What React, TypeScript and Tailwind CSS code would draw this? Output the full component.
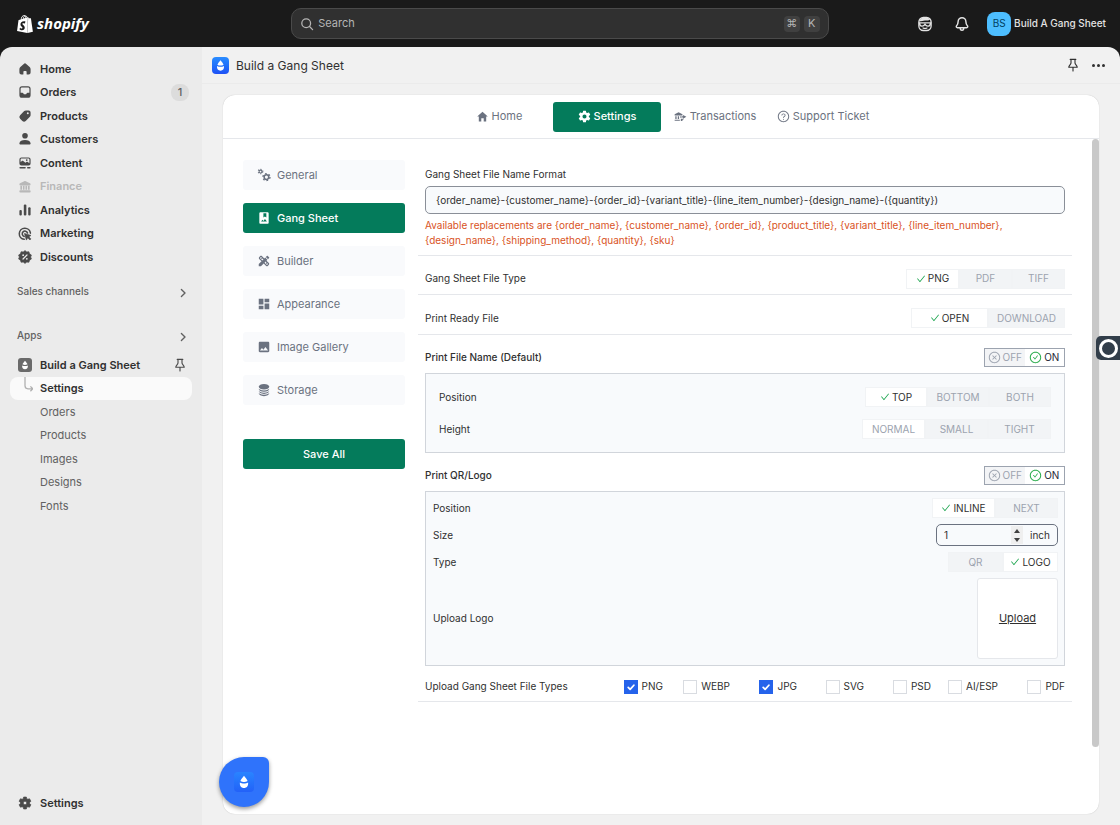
import React, { useState } from "react";
import {
  AiOutlineCheck,
  AiOutlineCheckCircle,
  AiOutlineCloseCircle,
  AiOutlineQuestionCircle,
} from "react-icons/ai";
import { IoMdHome } from "react-icons/io";
import { IoSettingsSharp } from "react-icons/io5";
import { MdDashboard, MdDesignServices, MdImage, MdPhotoAlbum } from "react-icons/md";
import { HiCircleStack } from "react-icons/hi2";
import { SiShopify } from "react-icons/si";

type IconProps = { className?: string };

function Svg({ className = "size-4", children }: IconProps & { children: React.ReactNode }) {
  return (
    <svg viewBox="0 0 20 20" fill="currentColor" className={`shrink-0 ${className}`} aria-hidden="true">
      {children}
    </svg>
  );
}

const HomeIcon = () => (
  <Svg>
    <path d="M8.5 3.6a2.2 2.2 0 0 1 3 0l4.3 4a3.6 3.6 0 0 1 1.2 2.7v4.2A2.5 2.5 0 0 1 14.500 17h-1.700a.8.8 0 0 1-.8-.8v-2.700a1 1 0 0 0-1-1H9a1 1 0 0 0-1 1v2.700a.8.8 0 0 1-.8.8H5.500A2.500 2.500 0 0 1 3 14.500v-4.200a3.600 3.600 0 0 1 1.200-2.700z" />
  </Svg>
);
const OrderIcon = () => (
  <Svg>
    <path
      fillRule="evenodd"
      d="M6.200 2.800h7.600A3.200 3.200 0 0 1 17 6v8a3.200 3.200 0 0 1-3.200 3.200H6.200A3.200 3.200 0 0 1 3 14V6a3.200 3.200 0 0 1 3.200-3.200zm0 1.600A1.700 1.700 0 0 0 4.500 6v4.800h2.300c.5 0 .9.300 1.100.7l.3.600c.2.400.600.700 1.100.7h1.400c.5 0 .9-.300 1.100-.7l.3-.6c.2-.4.6-.7 1.100-.7h2.300V6a1.700 1.700 0 0 0-1.700-1.600z"
    />
  </Svg>
);
const ProductIcon = () => (
  <Svg>
    <path
      fillRule="evenodd"
      d="M11.200 3h3.300A2.500 2.500 0 0 1 17 5.500v3.300c0 .8-.3 1.600-.9 2.200l-5.200 5.100a3 3 0 0 1-4.200 0l-2.800-2.800a3 3 0 0 1 0-4.200L9 3.900A3 3 0 0 1 11.200 3zm2.300 4.700a1.200 1.200 0 1 0 0-2.400 1.200 1.200 0 0 0 0 2.400z"
    />
  </Svg>
);
const PersonIcon = () => (
  <Svg>
    <circle cx="10" cy="6" r="3.500" />
    <path d="M3 15.200C3.500 12.700 6.200 11.200 10 11.200s6.500 1.500 7 4c.2 1-.6 1.800-1.600 1.800H4.600c-1 0-1.800-.8-1.600-1.800z" />
  </Svg>
);
const ContentIcon = () => (
  <Svg>
    <path
      fillRule="evenodd"
      d="M5.500 3h9A2.500 2.500 0 0 1 17 5.500v5a2.500 2.500 0 0 1-2.500 2.500h-9A2.500 2.500 0 0 1 3 10.500v-5A2.500 2.500 0 0 1 5.500 3zm.3 1.500c-.8 0-1.300.5-1.300 1.300v3l1.700-1.400c.5-.4 1.100-.4 1.600 0l2.700 2.300 1.200-.9c.5-.4 1.200-.4 1.700 0l2.100 1.500V5.800c0-.8-.5-1.300-1.300-1.300zM12.200 7.500a1.100 1.100 0 1 0 0-2.200 1.100 1.100 0 0 0 0 2.200z"
    />
    <rect x="3" y="15" width="8" height="1.800" rx=".9" />
    <rect x="12.500" y="15" width="4.500" height="1.800" rx=".9" />
  </Svg>
);
const FinanceIcon = () => (
  <Svg>
    <path d="M9.100 2.700c.6-.3 1.200-.3 1.800 0l5.300 2.600c1.400.7.900 2.700-.6 2.700H4.400C2.900 8 2.400 6 3.800 5.300z" />
    <path d="M4.200 8.500h2.200v5H4.200zm3.300 0h1.900v5H7.500zm3.100 0h1.900v5h-1.900zm3 0h2.200v5h-2.200z" />
    <rect x="3" y="14" width="14" height="3" rx="1" />
  </Svg>
);
const AnalyticsIcon = () => (
  <Svg>
    <rect x="3" y="10" width="3" height="7" rx="1.300" />
    <rect x="8.500" y="3" width="3.200" height="14" rx="1.300" />
    <rect x="14" y="6.500" width="3" height="10.500" rx="1.300" />
  </Svg>
);
const MarketingIcon = () => (
  <Svg>
    <path
      d="M9 16.700A7 7 0 1 1 16.800 9M9 13a3.400 3.400 0 1 1 4.200-4.300"
      fill="none"
      stroke="currentColor"
      strokeWidth="1.900"
      strokeLinecap="round"
    />
    <path d="M9.300 9.300l8.200 2.500-2.700 1.700 2.600 2.600-1.300 1.400-2.700-2.700-1.700 2.800z" stroke="currentColor" strokeWidth=".8" strokeLinejoin="round" />
  </Svg>
);
const DiscountIcon = () => (
  <Svg>
    <path d="M10 2l2.200 1.600 2.700-.2.800 2.600 2.300 1.500L17.100 10l.9 2.500-2.300 1.500-.8 2.600-2.700-.2L10 18l-2.200-1.600-2.700.2-.8-2.600L2 12.500l.9-2.500L2 7.500 4.300 6l.8-2.600 2.700.2z" stroke="currentColor" strokeWidth=".8" strokeLinejoin="round" />
    <path d="M7.500 12.500l5-5" stroke="#ebebeb" strokeWidth="1.500" strokeLinecap="round" />
    <circle cx="7.700" cy="7.800" r="1.100" fill="#ebebeb" />
    <circle cx="12.300" cy="12.200" r="1.100" fill="#ebebeb" />
  </Svg>
);
const GearIcon = () => (
  <Svg>
    <path
      fillRule="evenodd"
      d="M8.300 2.500h3.400l.6 2.100 1.200.7 2.200-.6 1.700 3-1.600 1.600v1.400l1.600 1.600-1.700 3-2.200-.6-1.200.7-.6 2.100H8.300l-.6-2.100-1.200-.7-2.200.6-1.700-3 1.600-1.600V9.300L2.600 7.700l1.700-3 2.200.6 1.200-.7zM10 12.200a2.200 2.200 0 1 0 0-4.400 2.200 2.200 0 0 0 0 4.400z"
      stroke="currentColor"
      strokeWidth=".8"
      strokeLinejoin="round"
    />
  </Svg>
);
const ChevronIcon = () => (
  <Svg>
    <path d="M8 5.500L12.500 10 8 14.500" fill="none" stroke="currentColor" strokeWidth="1.700" strokeLinecap="round" strokeLinejoin="round" />
  </Svg>
);
const PinIcon = () => (
  <Svg>
    <path
      d="M6.500 3h7M7.500 3v4.500c0 1.800-2.800 2.900-2.800 5.300h10.600c0-2.400-2.800-3.500-2.800-5.300V3M10 13v4.500"
      fill="none"
      stroke="currentColor"
      strokeWidth="1.400"
      strokeLinecap="round"
      strokeLinejoin="round"
    />
  </Svg>
);
const SidekickIcon = () => (
  <Svg className="size-[18px]">
    <rect x="3.200" y="2.800" width="13.600" height="14.400" rx="5" fill="none" stroke="currentColor" strokeWidth="1.500" />
    <path d="M3.500 6.800C4.500 3.800 7 2.800 10 2.800c2.500 0 4.500.7 5.600 2.200-1.600 1.600-3.600.9-5.600 1-2.500.1-4.500 1-6.500.8z" />
    <path
      d="M3 8.800h14M4 9.500c0 3.500 4.200 3.800 6 1 1.800 2.800 6 2.500 6-1"
      fill="none"
      stroke="currentColor"
      strokeWidth="1.500"
    />
    <path d="M7.800 14.400q2.200 1 4.400 0" fill="none" stroke="currentColor" strokeWidth="1.300" strokeLinecap="round" />
  </Svg>
);
const BellIcon = () => (
  <Svg className="size-[18px]">
    <path
      d="M10 3a4.300 4.300 0 0 0-4.300 4.300c0 2.600-.8 3.700-1.700 4.700-.8.900-.3 2.200.9 2.200h10.200c1.200 0 1.700-1.300.9-2.200-.9-1-1.700-2.100-1.700-4.700A4.300 4.300 0 0 0 10 3zM8 14.500c0 1.500.8 2.500 2 2.500s2-1 2-2.500"
      fill="none"
      stroke="currentColor"
      strokeWidth="1.600"
      strokeLinecap="round"
      strokeLinejoin="round"
    />
  </Svg>
);
const GearsIcon = ({ className }: IconProps) => (
  <Svg className={className}>
    <g fill="none" stroke="currentColor">
      <circle cx="5" cy="5" r="2" strokeWidth="1.500" />
      <circle cx="5" cy="5" r="3.300" strokeWidth="1.500" strokeDasharray="1.600 1.860" />
      <circle cx="13.500" cy="13" r="3.300" strokeWidth="2.200" />
      <circle cx="13.500" cy="13" r="5" strokeWidth="2" strokeDasharray="2.400 2.830" />
    </g>
  </Svg>
);
const BankTransferIcon = ({ className }: IconProps) => (
  <Svg className={className}>
    <path d="M7 3.500l6 3.200v1.600H1V6.700zM2 9.500h2V14H2zm3.800 0h2V14h-2zm3.800 0h2V12h-2zM1 15h8v1.600H1z" />
    <path d="M14 7.500l5 3-5 3v-2h-2v-2h2zM10.500 17v-3.500h4v1.600H13V17z" />
  </Svg>
);

function Droplet({ className }: IconProps) {
  return (
    <svg viewBox="0 0 20 20" fill="#fff" className={className} aria-hidden="true">
      <path d="M10 3.800c1.600 2 3 3.600 3.600 5.200-1.300.9-2.500 1-3.600 1s-2.300-.1-3.600-1C7 7.400 8.400 5.800 10 3.800z" />
      <path d="M5.900 10.600c1.300.8 2.700 1 4.100 1s2.800-.2 4.100-1c.4 3.400-1.300 5.500-4.100 5.500s-4.500-2.100-4.100-5.500z" />
    </svg>
  );
}

const mainNav = [
  { label: "Home", icon: <HomeIcon /> },
  { label: "Orders", icon: <OrderIcon />, badge: "1" },
  { label: "Products", icon: <ProductIcon /> },
  { label: "Customers", icon: <PersonIcon /> },
  { label: "Content", icon: <ContentIcon /> },
  { label: "Finance", icon: <FinanceIcon />, disabled: true },
  { label: "Analytics", icon: <AnalyticsIcon /> },
  { label: "Marketing", icon: <MarketingIcon /> },
  { label: "Discounts", icon: <DiscountIcon /> },
];

const appNav = ["Orders", "Products", "Images", "Designs", "Fonts"];

function TopBar() {
  return (
    <header className="flex h-[47px] shrink-0 items-center bg-[#1a1a1a] text-[#e3e3e3]">
      <div className="flex flex-1 items-center px-[14px]">
        <a href="#" aria-label="shopify" className="flex items-center gap-[3px] pl-[2px] text-white">
          <SiShopify className="h-5 w-[18px]" />
          <span className="pb-[2px] font-['Open_Sans',sans-serif] text-[15px] leading-5 font-bold italic">shopify</span>
        </a>
      </div>
      <label className="flex h-[31px] w-[48%] max-w-[640px] items-center gap-[3px] rounded-[10px] border border-[#4a4a4a] bg-[#303030] pr-2 pl-[7px]">
        <svg viewBox="0 0 20 20" className="size-4" fill="none" stroke="#b5b5b5" strokeWidth="1.600" strokeLinecap="round">
          <circle cx="9" cy="9" r="5.500" />
          <path d="M13.200 13.200L17 17" />
        </svg>
        <input
          type="search"
          aria-label="Search"
          placeholder="Search"
          className="min-w-0 flex-1 bg-transparent text-[11px] outline-none placeholder:text-[#b5b5b5]"
        />
        <span className="flex gap-1">
          <kbd className="flex h-4 w-4 items-center justify-center rounded bg-[#404040] font-[Inter,'DejaVu_Sans',sans-serif] text-[11px] text-[#b5b5b5]">⌘</kbd>
          <kbd className="flex h-4 w-4 items-center justify-center rounded bg-[#404040] font-[Inter,sans-serif] text-[11px] text-[#b5b5b5]">K</kbd>
        </span>
      </label>
      <div className="flex flex-1 items-center justify-end px-[14px]">
        <button aria-label="Sidekick" className="mr-[19px]"><SidekickIcon /></button>
        <button aria-label="Notifications" className="mr-4"><BellIcon /></button>
        <button className="flex items-center gap-[3px] text-[10px] font-medium whitespace-nowrap">
          <span className="flex size-6 items-center justify-center rounded-lg bg-[#4dbeff] font-normal text-[#00405f]">BS</span>
          Build A Gang Sheet
        </button>
      </div>
    </header>
  );
}

function SideNav() {
  return (
    <nav className="flex w-[202px] shrink-0 flex-col rounded-tl-xl bg-[#ebebeb] pt-[10px] text-[11px] text-[#303030]">
      <ul className="grid h-[212px] auto-rows-fr font-semibold">
        {mainNav.map((n) => (
          <li key={n.label}>
            <a
              href="#"
              className={`flex h-full items-center gap-[7px] pr-[13px] pl-[17px] ${n.disabled ? "text-[#b8b8b8]" : ""}`}
            >
              <span className={n.disabled ? "" : "text-[#4a4a4a]"}>{n.icon}</span>
              <span className="flex-1">{n.label}</span>
              {n.badge && (
                <span className="flex h-[17px] w-[18px] items-center justify-center rounded-lg bg-[#dcdcdc] font-medium text-[#616161]">
                  {n.badge}
                </span>
              )}
            </a>
          </li>
        ))}
      </ul>
      <div className="mt-[7px] flex flex-col gap-[10px]">
        {["Sales channels", "Apps"].map((t) => (
          <button key={t} className="flex h-[34px] items-center justify-between pr-[11px] pl-[17px] text-[10px] font-medium text-[#616161]">
            <span className="pb-1">{t}</span>
            <ChevronIcon />
          </button>
        ))}
      </div>
      <ul className="-mt-px grid h-[165px] auto-rows-fr">
        <li className="flex items-center gap-[7px] pr-[14px] pl-[17px] font-semibold">
          <span className="flex w-4 justify-center">
            <span className="size-[14px] rounded-[3px] bg-[#6a6a6a]">
              <Droplet className="size-[14px]" />
            </span>
          </span>
          <a href="#" className="flex-1">Build a Gang Sheet</a>
          <button aria-label="Unpin app" className="text-[#4a4a4a]"><PinIcon /></button>
        </li>
        <li className="mr-[10px] ml-[10px] rounded-lg bg-[#fafafa] font-semibold">
          <a href="#" className="flex h-full items-center gap-[7px] pl-[7px]">
            <svg viewBox="0 0 16 24" className="h-full w-4" fill="none" stroke="#b0b0b0" strokeWidth="1.300" aria-hidden="true">
              <path d="M8 0v9q0 3 3 3h5M13.500 9.500L16 12l-2.500 2.500" />
            </svg>
            Settings
          </a>
        </li>
        {appNav.map((n) => (
          <li key={n}>
            <a href="#" className="flex h-full items-center pl-10 text-[#616161]">{n}</a>
          </li>
        ))}
      </ul>
      <a href="#" className="mt-auto mb-[10px] flex h-6 items-center gap-[7px] pl-[17px] font-semibold">
        <span className="text-[#4a4a4a]"><GearIcon /></span>
        Settings
      </a>
    </nav>
  );
}

function Segmented({ label, options, initial, check = true, wide }: {
  label: string;
  options: string[];
  initial: string;
  check?: boolean;
  wide: string;
}) {
  const [value, setValue] = useState(initial);
  return (
    <div role="group" aria-label={label} className="flex">
      {options.map((o) => {
        const on = o === value;
        return (
          <button
            key={o}
            type="button"
            aria-pressed={on}
            onClick={() => setValue(o)}
            className={`flex h-5 items-center justify-center gap-0.5 border border-[#f1f3f5] ${wide} ${
              on ? "bg-white" : "bg-[#f2f4f6] text-[#9ca3af]"
            } ${on && !check ? "text-[#9ca3af]" : ""}`}
          >
            {on && check && <AiOutlineCheck className="size-[10px] text-[#16a34a]" />}
            {o}
          </button>
        );
      })}
    </div>
  );
}

function OnOff({ label }: { label: string }) {
  const [on, setOn] = useState(true);
  return (
    <div role="group" aria-label={label} className="flex h-[19px] w-[81px] border border-[#9ca3af]">
      <button
        type="button"
        aria-pressed={!on}
        onClick={() => setOn(false)}
        className="flex flex-1 items-center justify-center gap-0.5 bg-[#f3f4f6] text-[#9ca3af]"
      >
        <AiOutlineCloseCircle className="size-[13px]" />
        OFF
      </button>
      <button
        type="button"
        aria-pressed={on}
        onClick={() => setOn(true)}
        className="flex flex-1 items-center justify-center gap-0.5 bg-white text-[#1f2937]"
      >
        <AiOutlineCheckCircle className="size-[13px] text-[#22a845]" />
        ON
      </button>
    </div>
  );
}

function Row({ label, className = "", children }: { label: string; className?: string; children: React.ReactNode }) {
  return (
    <div className={`flex items-center justify-between ${className}`}>
      <span>{label}</span>
      {children}
    </div>
  );
}

const fileTypes = [
  { name: "PNG", on: true },
  { name: "WEBP", on: false },
  { name: "JPG", on: true },
  { name: "SVG", on: false },
  { name: "PSD", on: false },
  { name: "AI/ESP", on: false },
  { name: "PDF", on: false },
];

function FileTypeBox({ name, on }: { name: string; on: boolean }) {
  return (
    <label className="flex items-center justify-end gap-1">
      <span className="grid size-[14px] place-items-center">
        <input
          type="checkbox"
          defaultChecked={on}
          className="peer col-start-1 row-start-1 size-[14px] appearance-none border border-[#d9dce1] bg-white checked:border-[#2563eb] checked:bg-[#2563eb]"
        />
        <svg viewBox="0 0 16 16" className="pointer-events-none invisible col-start-1 row-start-1 size-[14px] peer-checked:visible" fill="none" stroke="#fff" strokeWidth="2" strokeLinecap="round" strokeLinejoin="round">
          <path d="M4.800 8.500l2.200 2.200 4.300-4.700" />
        </svg>
      </span>
      {name}
    </label>
  );
}

function NumberStepper() {
  const [value, setValue] = useState(1);
  return (
    <div className="flex h-[22px] w-[122px] items-center rounded-[5px] border border-[#6b7280] pr-[7px] pl-[7px]">
      <input
        type="text"
        inputMode="numeric"
        aria-label="Size in inches"
        value={value}
        onChange={(e) => setValue(Number(e.target.value) || 0)}
        className="min-w-0 flex-1 bg-transparent outline-none"
      />
      <span className="mr-[7px] flex w-3 flex-col bg-[#efefef]">
        <button type="button" aria-label="Increase" onClick={() => setValue(value + 1)} className="flex h-[9px] items-center justify-center">
          <svg viewBox="0 0 6 4" className="h-1 w-[6px]" fill="#404040"><path d="M0 4l3-4 3 4z" /></svg>
        </button>
        <button type="button" aria-label="Decrease" onClick={() => setValue(value - 1)} className="flex h-[9px] items-center justify-center">
          <svg viewBox="0 0 6 4" className="h-1 w-[6px]" fill="#404040"><path d="M0 0l3 4 3-4z" /></svg>
        </button>
      </span>
      inch
    </div>
  );
}

const tabs = [
  { label: "Home", icon: <IoMdHome className="size-[13px]" /> },
  { label: "Settings", icon: <IoSettingsSharp className="size-[13px]" />, active: true },
  { label: "Transactions", icon: <BankTransferIcon className="size-[13px]" /> },
  { label: "Support Ticket", icon: <AiOutlineQuestionCircle className="size-[13px]" /> },
];

const sections = [
  { label: "General", icon: <GearsIcon className="size-[14px]" /> },
  { label: "Gang Sheet", icon: <MdPhotoAlbum className="size-[14px]" />, active: true },
  { label: "Builder", icon: <MdDesignServices className="size-[14px]" /> },
  { label: "Appearance", icon: <MdDashboard className="size-[14px]" /> },
  { label: "Image Gallery", icon: <MdImage className="size-[14px]" /> },
  { label: "Storage", icon: <HiCircleStack className="size-[14px]" /> },
];

function GangSheetForm() {
  return (
    <form className="min-w-0 flex-1 text-[10px] leading-[15px] text-[#303030]" onSubmit={(e) => e.preventDefault()}>
      <div className="border-b border-[#e5e7eb] px-[7px] pt-[7px] pb-[7px]">
        <label htmlFor="file-format" className="block">Gang Sheet File Name Format</label>
        <input
          id="file-format"
          defaultValue="{order_name}-{customer_name}-{order_id}-{variant_title}-{line_item_number}-{design_name}-({quantity})"
          className="mt-1 block h-[28px] w-full rounded-[5px] border border-[#8a8f98] bg-[#f8fafc] px-[10px] outline-none"
        />
        <p className="mt-1 text-[#d9531e]">
          {"Available replacements are {order_name}, {customer_name}, {order_id}, {product_title}, {variant_title}, {line_item_number}, {design_name}, {shipping_method}, {quantity}, {sku}"}
        </p>
      </div>
      <Row label="Gang Sheet File Type" className="h-[39px] border-b border-[#e5e7eb] px-[7px] pt-[7px]">
        <Segmented label="Gang Sheet File Type" options={["PNG", "PDF", "TIFF"]} initial="PNG" wide="w-[53px]" />
      </Row>
      <Row label="Print Ready File" className="h-10 border-b border-[#e5e7eb] px-[7px] pt-[7px]">
        <Segmented label="Print Ready File" options={["OPEN", "DOWNLOAD"]} initial="OPEN" wide="w-[77px]" />
      </Row>
      <div className="px-[7px]">
        <Row label="Print File Name (Default)" className="mt-3 h-5 font-medium">
          <div className="font-normal"><OnOff label="Print File Name" /></div>
        </Row>
        <div className="mt-[6px] flex flex-col gap-3 border border-[#d1d5db] bg-[#f8fafc] px-[13px] py-[13px]">
          <Row label="Position" className="h-5">
            <Segmented label="Name position" options={["TOP", "BOTTOM", "BOTH"]} initial="TOP" wide="w-[62px]" />
          </Row>
          <Row label="Height" className="h-5">
            <Segmented label="Name height" options={["NORMAL", "SMALL", "TIGHT"]} initial="NORMAL" check={false} wide="w-[63px]" />
          </Row>
        </div>
        <Row label="Print QR/Logo" className="mt-3 h-5 font-medium">
          <div className="font-normal"><OnOff label="Print QR/Logo" /></div>
        </Row>
        <div className="mt-[6px] flex flex-col gap-[5px] border border-[#d1d5db] bg-[#f8fafc] py-[5px] pr-[6px] pl-[7px]">
          <Row label="Position" className="h-[22px]">
            <Segmented label="Logo position" options={["INLINE", "NEXT"]} initial="INLINE" wide="w-[63px]" />
          </Row>
          <Row label="Size" className="h-[22px]">
            <NumberStepper />
          </Row>
          <Row label="Type" className="h-[22px]">
            <Segmented label="Logo type" options={["QR", "LOGO"]} initial="LOGO" wide="w-[55px]" />
          </Row>
          <Row label="Upload Logo" className="pb-px">
            <button type="button" className="size-[81px] rounded-[3px] border border-[#e5e7eb] bg-white text-[11px] underline">
              Upload
            </button>
          </Row>
        </div>
      </div>
      <Row label="Upload Gang Sheet File Types" className="border-b border-[#e5e7eb] px-[7px] pt-[13px] pb-[7px]">
        <div className="grid w-[469px] grid-cols-7">
          {fileTypes.map((f) => (
            <FileTypeBox key={f.name} name={f.name} on={f.on} />
          ))}
        </div>
      </Row>
    </form>
  );
}

export default function App() {
  return (
    <div className="flex h-screen flex-col overflow-hidden bg-[#1a1a1a] font-[Inter,sans-serif]">
      <TopBar />
      <div className="flex min-h-0 flex-1">
        <SideNav />
        <main className="flex min-w-0 flex-1 flex-col rounded-tr-xl bg-[#f1f1f1]">
          <div className="flex h-[37px] shrink-0 items-center gap-[7px] border-b border-[#ebebeb] pr-[15px] pl-[10px] text-[#303030]">
            <span className="size-[17px] rounded bg-linear-to-b from-[#2a8cff] to-[#1f50f5]">
              <Droplet className="size-[17px]" />
            </span>
            <h1 className="flex-1 pt-px text-[12px]">Build a Gang Sheet</h1>
            <button aria-label="Pin" className="mr-1"><PinIcon /></button>
            <button aria-label="More actions" className="flex gap-[2px]">
              <i className="size-[3px] rounded-full bg-[#303030]" />
              <i className="size-[3px] rounded-full bg-[#303030]" />
              <i className="size-[3px] rounded-full bg-[#303030]" />
            </button>
          </div>
          <section className="mt-[11px] mr-[21px] mb-[11px] ml-[21px] flex min-h-0 flex-1 flex-col overflow-hidden rounded-xl bg-white shadow-[0_0_1px_rgba(0,0,0,0.25)]">
            <div className="flex h-11 shrink-0 items-center justify-center border-b border-[#e5e7eb] text-[11px] text-[#6b7280]">
              {tabs.map((t) => (
                <button
                  key={t.label}
                  className={`flex h-[30px] w-[108px] items-center justify-center gap-[3px] rounded-[3px] whitespace-nowrap ${
                    t.active ? "bg-[#047b5b] font-medium text-white" : ""
                  }`}
                >
                  {t.icon}
                  {t.label}
                </button>
              ))}
            </div>
            <div className="flex min-h-0 flex-1">
              <div className="flex min-w-0 flex-1 gap-[13px] px-5 pt-[21px]">
                <div className="flex w-[162px] shrink-0 flex-col text-[11px] text-[#6b7280]">
                  <div className="flex flex-col gap-[13px]">
                    {sections.map((s) => (
                      <button
                        key={s.label}
                        className={`flex h-[30px] items-center gap-[6px] rounded-[3px] pl-[14px] ${
                          s.active ? "bg-[#047b5b] font-medium text-white" : "bg-[#f9fafc]"
                        }`}
                      >
                        {s.icon}
                        {s.label}
                      </button>
                    ))}
                  </div>
                  <button className="mt-[34px] h-[30px] rounded-[3px] bg-[#047b5b] font-medium text-white">Save All</button>
                </div>
                <GangSheetForm />
              </div>
              <div className="w-[7px] shrink-0">
                <div className="h-9/10 rounded-full bg-[#c8c8c8]" />
              </div>
            </div>
          </section>
        </main>
      </div>

      <button
        aria-label="Open help chat"
        className="fixed bottom-[18px] left-[219px] flex size-[50px] items-center justify-center rounded-[25px] rounded-tr-[6px] bg-[#2f73fb] shadow-[0_2px_4px_rgba(0,0,0,0.4)]"
      >
        <span className="size-5 rounded bg-linear-to-b from-[#2a84ff] to-[#2361f8]">
          <Droplet className="size-5" />
        </span>
      </button>
      <button
        aria-label="Open recorder"
        className="fixed top-[336px] right-0 flex h-6 w-6 items-center justify-center rounded-l-[5px] bg-[#323e4a]"
      >
        <span className="size-[19px] rounded-full border-3 border-white" />
      </button>
    </div>
  );
}
